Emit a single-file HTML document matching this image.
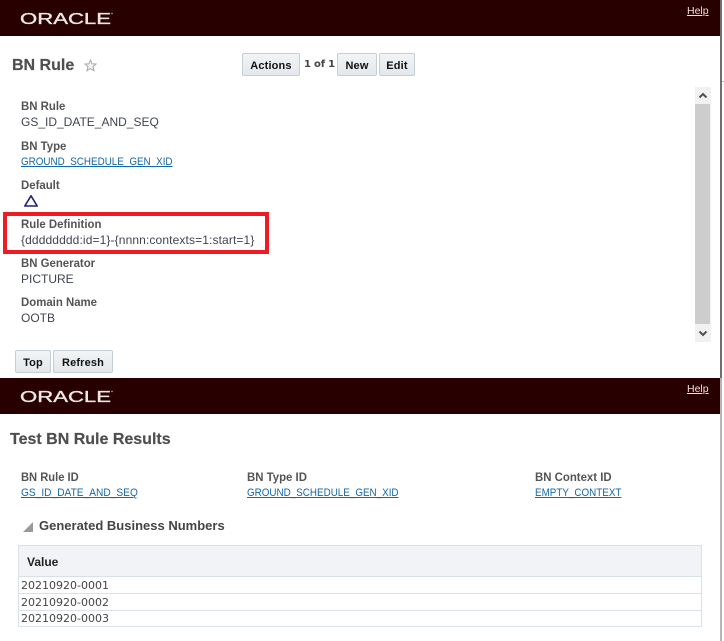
<!DOCTYPE html>
<html><head><meta charset="utf-8"><style>
html,body{margin:0;padding:0;background:#fff;width:724px;height:641px;overflow:hidden;font-family:"Liberation Sans",sans-serif}
div,a{position:absolute;white-space:nowrap}
.bar{left:0;width:720px;height:36px;background:#290000}
.help{left:687px;font-size:10.5px;line-height:12px;color:#f0e0d0;text-decoration:underline}
.l{font-size:12px;font-weight:bold;color:#545454;line-height:14px;left:21px;transform:scaleX(.95);transform-origin:0 0}
.v{font-size:12px;color:#3f4450;line-height:14px;left:21px}
.k{font-size:11px;color:#1467a8;text-decoration:underline;line-height:14px;left:21px;transform:scaleX(.895);transform-origin:0 0}
.b{box-sizing:border-box;height:23px;background:linear-gradient(#f2f4f5,#e3e8ec);border:1px solid #c4ced6;border-radius:2px;font-size:11px;letter-spacing:.15px;font-weight:bold;color:#111;line-height:24px;text-align:center}
.h{font-size:16px;font-weight:bold;color:#4f4f4f;line-height:18px;-webkit-text-stroke:.2px #4f4f4f}
.row{left:18px;width:684px;box-sizing:border-box;border:1px solid #d9e0e6;border-top:0;background:#fff;font:11px/16px "DejaVu Sans",sans-serif;color:#444;padding-left:2px}
svg{position:absolute}
</style></head><body>
<div style="left:720px;top:0;width:2px;height:378px;background:#6f6f6f"></div>
<div style="left:720px;top:378px;width:2px;height:263px;background:#b5b5b5"></div>
<div style="left:722px;top:81px;width:2px;height:1px;background:#a9b4c4"></div>

<div class="bar" style="top:0"></div>
<svg style="left:18px;top:8px" width="100" height="20"><text x="2" y="16" font-family="Liberation Sans" font-size="16" fill="#ece8e6" stroke="#ece8e6" stroke-width=".35" textLength="91" lengthAdjust="spacingAndGlyphs">ORACLE</text><circle cx="94" cy="5.5" r=".7" fill="#ccc"/></svg>
<a class="help" style="top:5px">Help</a>

<div class="h" style="left:12px;top:57px">BN Rule</div>
<svg style="left:84px;top:59px" width="13" height="13" viewBox="0 0 13 13"><path d="M6.5 1 8 4.8 12 5.1 9 7.7 10 11.8 6.5 9.6 3 11.8 4 7.7 1 5.1 5 4.8Z" fill="#f4f4f4" stroke="#a8a8a8" stroke-width="1"/></svg>

<div class="b" style="left:242px;top:53px;width:58px">Actions</div>
<div style="left:304px;top:58px;font:bold 10px/13px 'DejaVu Sans',sans-serif;color:#444;letter-spacing:-.2px">1 of 1</div>
<div class="b" style="left:337px;top:53px;width:40px">New</div>
<div class="b" style="left:379px;top:53px;width:36px">Edit</div>

<div class="l" style="top:99px">BN Rule</div>
<div class="v" style="top:115px">GS_ID_DATE_AND_SEQ</div>
<div class="l" style="top:139px">BN Type</div>
<div class="k" style="top:155px">GROUND_SCHEDULE_GEN_XID</div>
<div class="l" style="top:178px">Default</div>
<svg style="left:23px;top:193px" width="16" height="15" viewBox="0 0 16 15"><path d="M8 2.8 14.2 13H1.8Z" fill="#fff" stroke="#1c2377" stroke-width="1.6" stroke-linejoin="round"/></svg>
<div style="left:3px;top:212px;width:266px;height:42px;box-sizing:border-box;border:4px solid #ed1c24"></div>
<div class="l" style="top:217px">Rule Definition</div>
<div class="v" style="top:233px;letter-spacing:.12px">{dddddddd:id=1}-{nnnn:contexts=1:start=1}</div>
<div class="l" style="top:256px">BN Generator</div>
<div class="v" style="top:272px">PICTURE</div>
<div class="l" style="top:295px">Domain Name</div>
<div class="v" style="top:311px">OOTB</div>

<div style="left:695px;top:87px;width:16px;height:255px;background:#f1f1f1"></div>
<div style="left:695px;top:104px;width:15px;height:220px;background:#cdcdcd"></div>
<svg style="left:695px;top:87px" width="16" height="17"><path d="M4.5 10.5 8 7l3.5 3.5" fill="none" stroke="#505050" stroke-width="2"/></svg>
<svg style="left:695px;top:325px" width="16" height="17"><path d="M4.5 6.5 8 10l3.5-3.5" fill="none" stroke="#505050" stroke-width="2"/></svg>

<div class="b" style="left:15px;top:350px;width:36px">Top</div>
<div class="b" style="left:53px;top:350px;width:60px">Refresh</div>

<div class="bar" style="top:378px"></div>
<svg style="left:18px;top:386px" width="100" height="20"><text x="2" y="16" font-family="Liberation Sans" font-size="16" fill="#ece8e6" stroke="#ece8e6" stroke-width=".35" textLength="91" lengthAdjust="spacingAndGlyphs">ORACLE</text><circle cx="94" cy="5.5" r=".7" fill="#ccc"/></svg>
<a class="help" style="top:383px">Help</a>

<div class="h" style="left:10px;top:431px">Test BN Rule Results</div>

<div class="l" style="top:470px;transform:scaleX(.93)">BN Rule ID</div>
<div class="k" style="top:486px;transform:scaleX(.925)">GS_ID_DATE_AND_SEQ</div>
<div class="l" style="top:470px;left:247px">BN Type ID</div>
<div class="k" style="top:486px;left:247px">GROUND_SCHEDULE_GEN_XID</div>
<div class="l" style="top:470px;left:535px">BN Context ID</div>
<div class="k" style="top:486px;left:535px">EMPTY_CONTEXT</div>

<svg style="left:23px;top:521px" width="11" height="12"><path d="M10 1V11H0Z" fill="#9a9a9a"/></svg>
<div style="left:39px;top:518px;font-size:13px;font-weight:bold;line-height:15px;color:#444">Generated Business Numbers</div>

<div style="left:18px;top:545px;width:684px;height:32px;box-sizing:border-box;border:1px solid #d9e0e6;background:#f2f3f6;font-size:12px;font-weight:bold;color:#222;line-height:32px;padding-left:8px">Value</div>
<div class="row" style="top:577px;height:17px;line-height:17px">20210920-0001</div>
<div class="row" style="top:594px;height:17px;line-height:17px">20210920-0002</div>
<div class="row" style="top:611px;height:16px">20210920-0003</div>
</body></html>
